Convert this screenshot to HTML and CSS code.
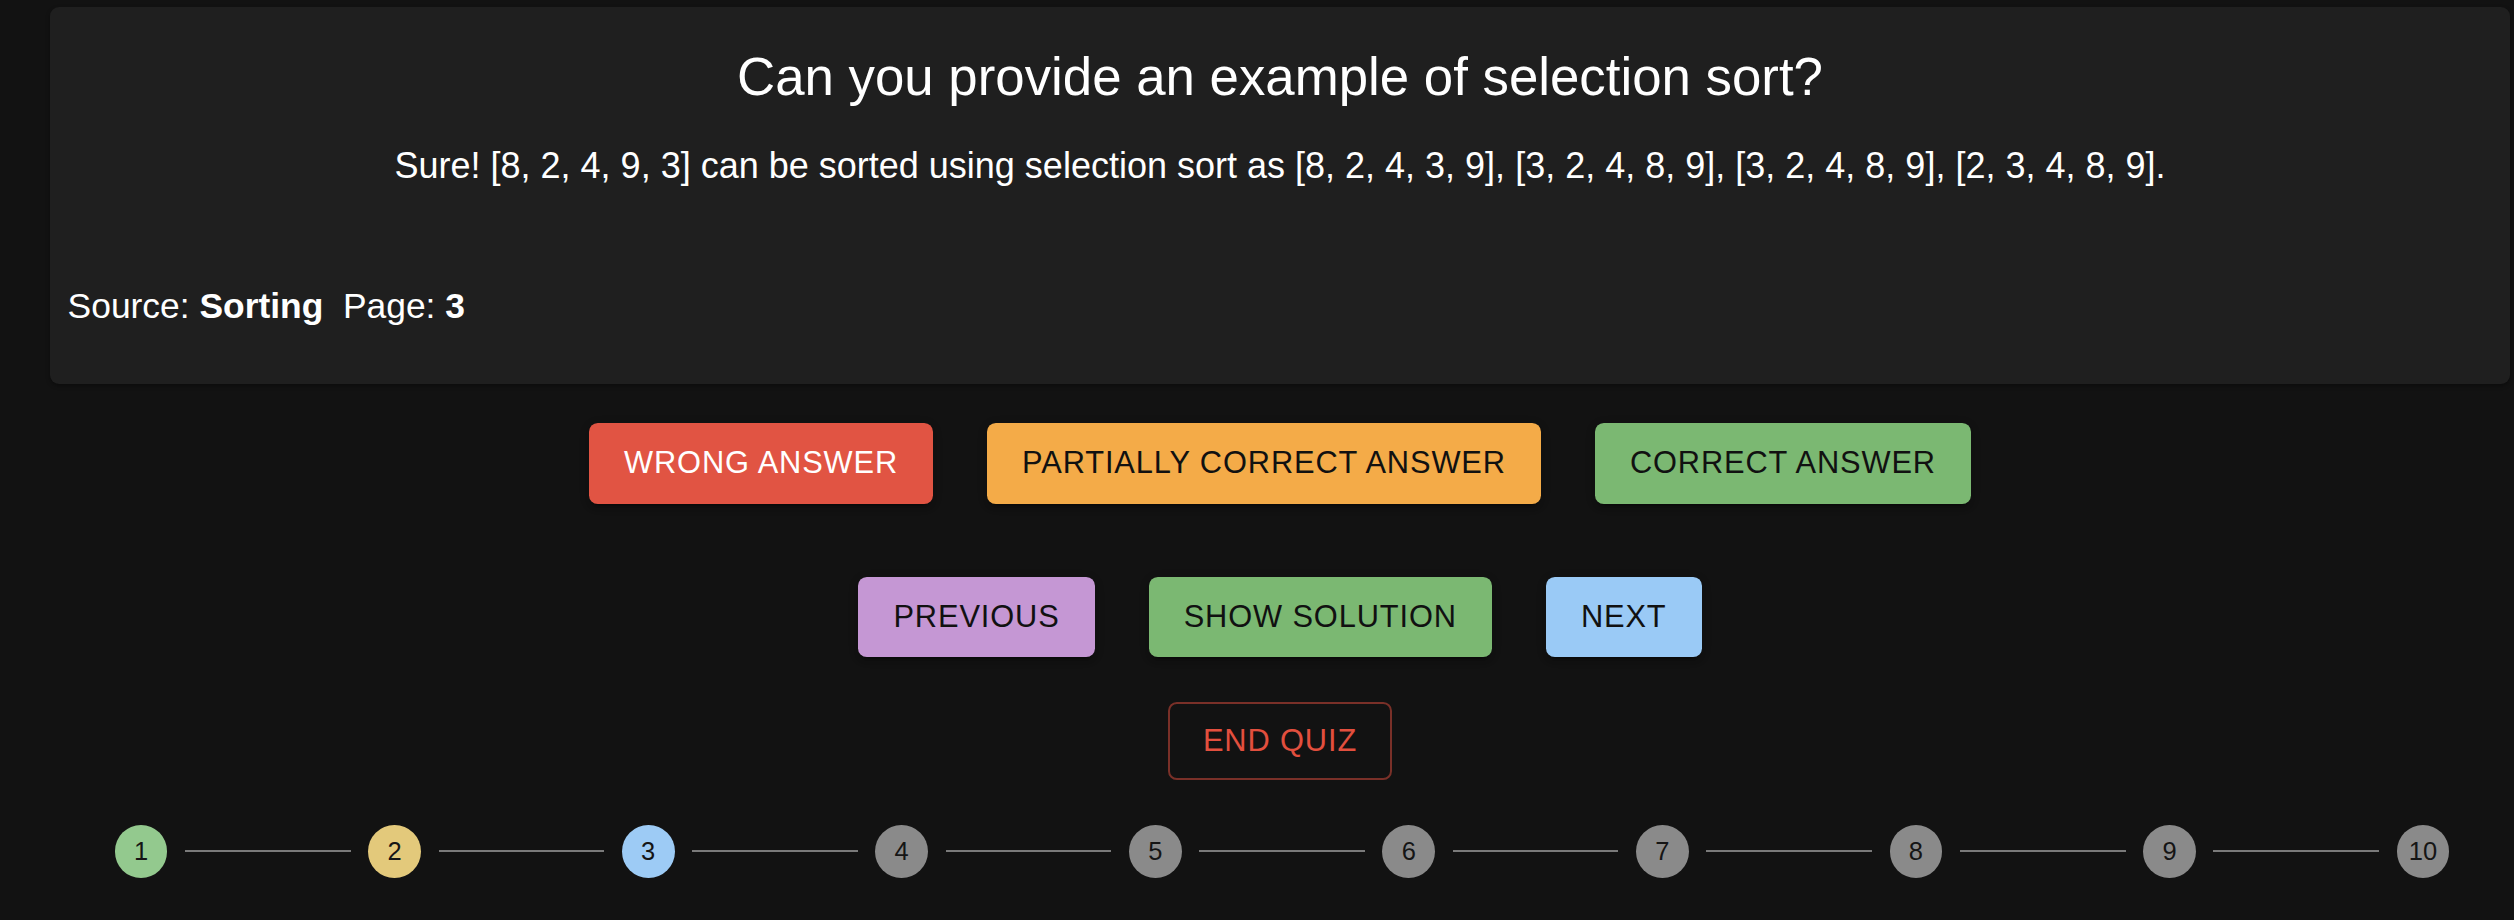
FILE: index.html
```html
<!DOCTYPE html>
<html lang="en">
<head>
<meta charset="utf-8">
<title>Quiz</title>
<link rel="stylesheet" href="styles.css">
</head>
<body>
<main class="page">
  <section class="card">
    <h2 class="question">Can you provide an example of selection sort?</h2>
    <p class="answer">Sure! [8, 2, 4, 9, 3] can be sorted using selection sort as [8, 2, 4, 3, 9], [3, 2, 4, 8, 9], [3, 2, 4, 8, 9], [2, 3, 4, 8, 9].</p>
    <p class="source">Source: <b>Sorting</b>&nbsp; Page: <b>3</b></p>
  </section>

  <div class="row row-grade">
    <button class="btn btn-wrong">Wrong Answer</button>
    <button class="btn btn-partial">Partially Correct Answer</button>
    <button class="btn btn-correct">Correct Answer</button>
  </div>

  <div class="row row-nav">
    <button class="btn btn-prev">Previous</button>
    <button class="btn btn-solution">Show Solution</button>
    <button class="btn btn-next">Next</button>
  </div>

  <div class="row row-end">
    <button class="btn btn-end">End Quiz</button>
  </div>

  <div class="stepper">
    <div class="step"><span class="dot dot-correct">1</span></div>
    <div class="connector"></div>
    <div class="step"><span class="dot dot-partial">2</span></div>
    <div class="connector"></div>
    <div class="step"><span class="dot dot-current">3</span></div>
    <div class="connector"></div>
    <div class="step"><span class="dot">4</span></div>
    <div class="connector"></div>
    <div class="step"><span class="dot">5</span></div>
    <div class="connector"></div>
    <div class="step"><span class="dot">6</span></div>
    <div class="connector"></div>
    <div class="step"><span class="dot">7</span></div>
    <div class="connector"></div>
    <div class="step"><span class="dot">8</span></div>
    <div class="connector"></div>
    <div class="step"><span class="dot">9</span></div>
    <div class="connector"></div>
    <div class="step"><span class="dot">10</span></div>
  </div>
</main>
</body>
</html>
```

FILE: styles.css
```css
html, body {
  margin: 0;
  padding: 0;
  background: #121212;
}

body {
  font-family: "Liberation Sans", Arial, Helvetica, sans-serif;
  color: #ffffff;
  width: 2514px;
  height: 920px;
  overflow: hidden;
}

.page {
  display: flex;
  flex-direction: column;
  padding: 7px 4px 0 50px;
}

.card {
  padding: 35.2px 17.6px 51px 17.6px;
  background: #1f1f1f;
  border-radius: 9px;
  box-shadow: 0 2px 4px rgba(0, 0, 0, 0.35);
}

.question {
  margin: 0;
  font-size: 52.8px;
  line-height: 70.4px;
  font-weight: 400;
  text-align: center;
  color: #ffffff;
}

.answer {
  margin: 27.8px 0 0 0;
  font-size: 36px;
  line-height: 52.8px;
  text-align: center;
}

.source {
  margin: 87px 0 0 0;
  font-size: 35.4px;
  line-height: 52.8px;
}

.source b {
  font-weight: 700;
}

.row {
  display: flex;
  justify-content: center;
  gap: 54px;
}

.row-grade {
  margin-top: 39px;
}

.row-nav {
  margin-top: 73px;
}

.row-end {
  margin-top: 45px;
}

.btn {
  font-family: "Liberation Sans", Arial, Helvetica, sans-serif;
  font-size: 30.8px;
  line-height: 53.6px;
  font-weight: 400;
  letter-spacing: 0.88px;
  text-transform: uppercase;
  padding: 13.5px 35px;
  border: 0;
  border-radius: 8.8px;
  color: #111111;
  box-shadow: 0 6px 2px -4px rgba(0, 0, 0, 0.2), 0 4px 4px 0 rgba(0, 0, 0, 0.14), 0 2px 11px 0 rgba(0, 0, 0, 0.12);
  cursor: pointer;
}

.btn-wrong { background: #e15443; color: #ffffff; }
.btn-partial { background: #f4ab48; }
.btn-correct { background: #7bb872; }
.btn-prev { background: #c597d4; }
.btn-solution { background: #7bb872; }
.btn-next { background: #9acaf6; }

.btn-end {
  background: transparent;
  color: #e24f3e;
  border: 2px solid #7a3028;
  padding: 10px 33px;
  box-shadow: none;
}

.stepper {
  display: flex;
  align-items: center;
  margin: 45px 43px 0 47px;
}

.step {
  padding: 0 17.6px;
  display: flex;
}

.dot {
  width: 52.8px;
  height: 52.8px;
  border-radius: 50%;
  background: #8a8a8a;
  color: #151515;
  font-size: 25.5px;
  display: flex;
  align-items: center;
  justify-content: center;
}

.dot-correct { background: #93c98e; }
.dot-partial { background: #e3c97b; }
.dot-current { background: #9dcbf5; }

.connector {
  flex: 1 1 auto;
  border-top: 2px solid #7a7a7a;
}
```
